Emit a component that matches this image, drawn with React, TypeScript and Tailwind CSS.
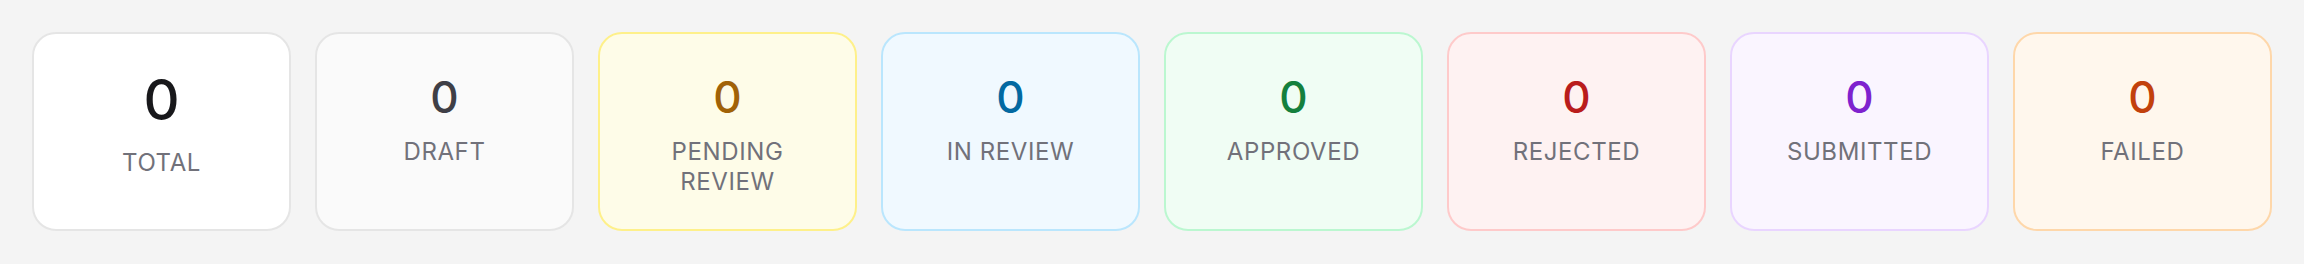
import React from 'react';

type Stat = {
    label: string;
    value: number;
    card: string;
    number: string;
    big?: boolean;
};

const stats: Stat[] = [
    { label: 'Total', value: 0, card: 'bg-white border-[#e5e5e5]', number: 'text-[#18181b]', big: true },
    { label: 'Draft', value: 0, card: 'bg-[#fafafa] border-[#e5e5e5]', number: 'text-[#3f3f46]' },
    { label: 'Pending Review', value: 0, card: 'bg-[#fefce8] border-[#fef08a]', number: 'text-[#a16207]' },
    { label: 'In Review', value: 0, card: 'bg-[#f0f9ff] border-[#bae6fd]', number: 'text-[#0369a1]' },
    { label: 'Approved', value: 0, card: 'bg-[#f0fdf4] border-[#bbf7d0]', number: 'text-[#15803d]' },
    { label: 'Rejected', value: 0, card: 'bg-[#fef2f2] border-[#fecaca]', number: 'text-[#b91c1c]' },
    { label: 'Submitted', value: 0, card: 'bg-[#faf5ff] border-[#e9d5ff]', number: 'text-[#7e22ce]' },
    { label: 'Failed', value: 0, card: 'bg-[#fff7ed] border-[#fed7aa]', number: 'text-[#c2410c]' },
];

function StatCard({ stat }: { stat: Stat }) {
    return (
        <div
            className={`flex h-[199px] flex-col items-center rounded-[24px] border-2 px-8 text-center ${stat.big ? 'pt-[38px]' : 'pt-[41px]'} ${stat.card}`}
        >
            <p className={`font-medium leading-none ${stat.big ? 'text-[56px]' : 'text-[44px]'} ${stat.number}`}>{stat.value}</p>
            <p className={`${stat.big ? 'mt-[20px]' : 'mt-[18px]'} text-[24px] uppercase leading-[30px] tracking-wide text-[#71717a]`}>
                {stat.label}
            </p>
        </div>
    );
}

export default function App() {
    return (
        <div className="min-h-[264px] bg-[#f4f4f4] px-8 pt-8" style={{ fontFamily: 'Inter, "Noto Sans", sans-serif' }}>
            <div className="grid grid-cols-8 gap-6">
                {stats.map((stat) => (
                    <StatCard key={stat.label} stat={stat} />
                ))}
            </div>
        </div>
    );
}
